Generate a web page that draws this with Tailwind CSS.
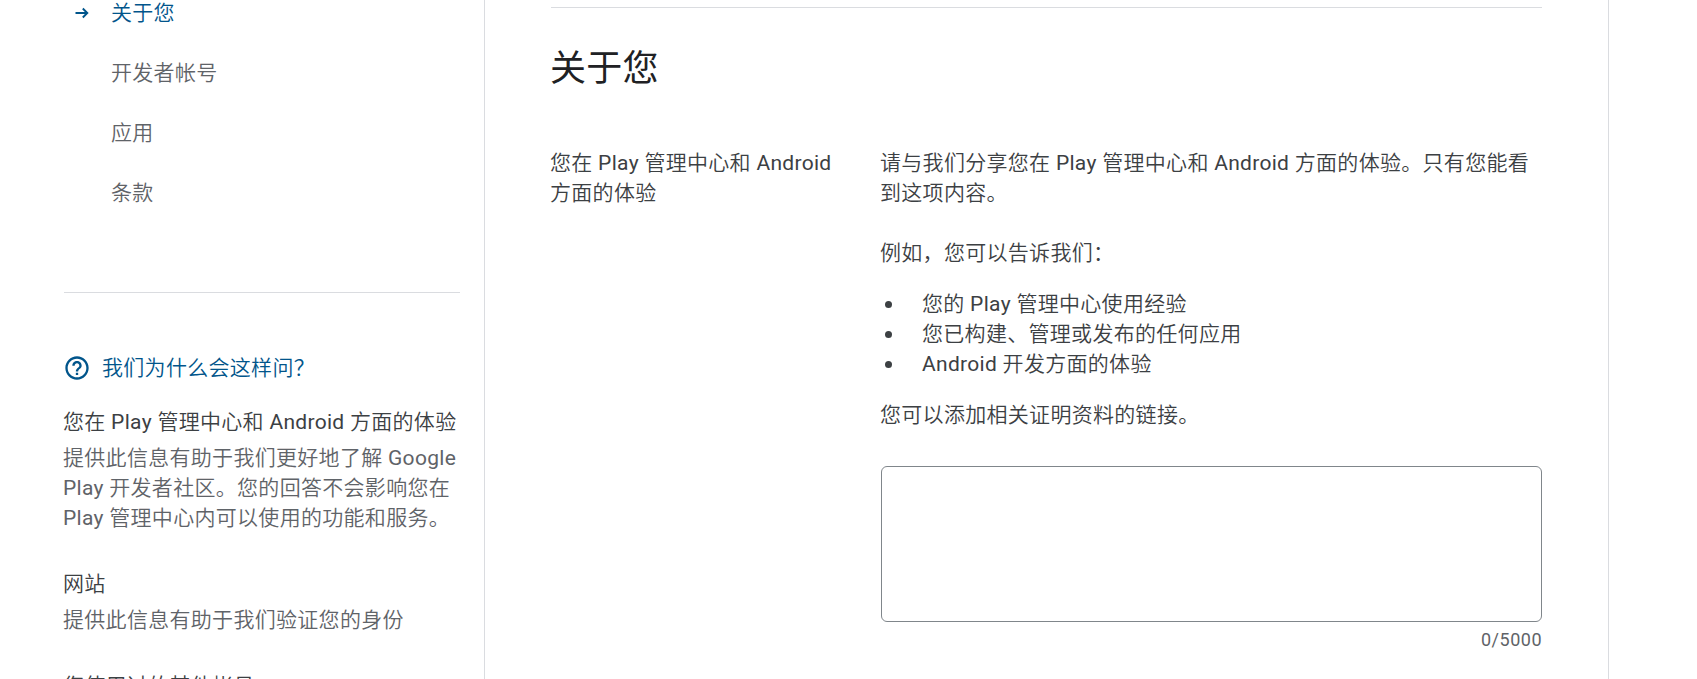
<!DOCTYPE html>
<html lang="zh-CN">
  <head>
    <meta charset="UTF-8" />
    <meta name="viewport" content="width=device-width,initial-scale=1" />
    <title>关于您</title>
    <script src="https://cdn.jsdelivr.net/npm/@tailwindcss/browser@4"></script>
  </head>
  <body
    class="bg-white overflow-hidden font-[Roboto,'Noto_Sans_CJK_SC_DemiLight','Noto_Sans_CJK_SC',sans-serif] font-normal text-[21px] leading-[30px] tracking-[0.3px] text-[#3c4043]"
  >
    <div class="flex h-[679px] w-[1609px] overflow-hidden border-r border-[#dadce0]">
      <!-- Sidebar -->
      <aside class="w-[485px] shrink-0 border-r border-[#dadce0] pl-16 pr-6">
        <nav class="-mt-[17px] text-[#5f6368]">
          <a class="flex h-[60px] items-center text-[#01558b]">
            <svg class="ml-[11px] mr-[22px] w-[14px] h-[12px]" viewBox="0 0 14 12" fill="none" stroke="currentColor" stroke-width="1.9">
              <path d="M0.500 6H12M7.800 1.500L12.300 6L7.800 10.500" />
            </svg>
            关于您
          </a>
          <a class="flex h-[60px] items-center pl-[47px]">开发者帐号</a>
          <a class="flex h-[60px] items-center pl-[47px]">应用</a>
          <a class="flex h-[60px] items-center pl-[47px]">条款</a>
        </nav>

        <hr class="mt-[69px] border-[#dadce0]" />

        <!-- Help -->
        <div class="mt-[60px] flex items-center text-[#01558b]">
          <svg class="ml-[-1px] mr-[11px] w-7 h-7" viewBox="0 0 24 24" fill="currentColor">
            <path d="M11 18h2v-2h-2v2zm1-16C6.480 2 2 6.480 2 12s4.480 10 10 10 10-4.480 10-10S17.520 2 12 2zm0 18c-4.410 0-8-3.590-8-8s3.590-8 8-8 8 3.590 8 8-3.590 8-8 8zm0-14c-2.210 0-4 1.790-4 4h2c0-1.100.900-2 2-2s2 .900 2 2c0 2-3 1.750-3 5h2c0-2.250 3-2.500 3-5 0-2.210-1.790-4-4-4z" />
          </svg>
          <span>我们为什么会这样问？</span>
        </div>
        <div class="-ml-px">
          <h4 class="mt-6 whitespace-nowrap">您在 Play 管理中心和 Android 方面的体验</h4>
          <p class="mt-1.5 whitespace-nowrap text-[#5f6368]">
            提供此信息有助于我们更好地了解 Google<br />Play 开发者社区。您的回答不会影响您在<br />Play 管理中心内可以使用的功能和服务。
          </p>
          <h4 class="mt-9">网站</h4>
          <p class="mt-1.5 text-[#5f6368]">提供此信息有助于我们验证您的身份</p>
          <h4 class="mt-9">您使用过的其他帐号</h4>
        </div>
      </aside>

      <!-- Content -->
      <main class="flex-1 pl-[66px] pr-[66px] pt-[7px]">
        <hr class="border-[#dadce0]" />
        <h1 class="-ml-px mt-[33px] font-['Noto_Sans_CJK_SC',sans-serif] text-4xl leading-[48px] tracking-[0.2px] text-[#202124]">关于您</h1>
        <div class="mt-[59px] flex">
          <div class="-ml-px w-[331px] shrink-0 whitespace-nowrap">
            您在 Play 管理中心和 Android<br />方面的体验
          </div>
          <div class="flex-1 whitespace-nowrap">
            <div class="-ml-px">
              <p>请与我们分享您在 Play 管理中心和 Android 方面的体验。只有您能看<br />到这项内容。</p>
              <p class="mt-[30px]">例如，您可以告诉我们：</p>
              <ul class="mt-[21px]">
                <li class="flex items-center"><span class="ml-[5px] mr-[30px] size-[7px] rounded-full bg-[#3c4043]"></span>您的 Play 管理中心使用经验</li>
                <li class="flex items-center"><span class="ml-[5px] mr-[30px] size-[7px] rounded-full bg-[#3c4043]"></span>您已构建、管理或发布的任何应用</li>
                <li class="flex items-center"><span class="ml-[5px] mr-[30px] size-[7px] rounded-full bg-[#3c4043]"></span>Android 开发方面的体验</li>
              </ul>
              <p class="mt-[21px]">您可以添加相关证明资料的链接。</p>
            </div>
            <textarea class="mt-9 block h-[156px] w-full resize-none rounded-md border border-[#80868b]"></textarea>
            <div class="mt-1 text-right text-lg leading-[28px] tracking-[0.5px] text-[#5f6368]">0/5000</div>
          </div>
        </div>
      </main>
    </div>
  </body>
</html>
